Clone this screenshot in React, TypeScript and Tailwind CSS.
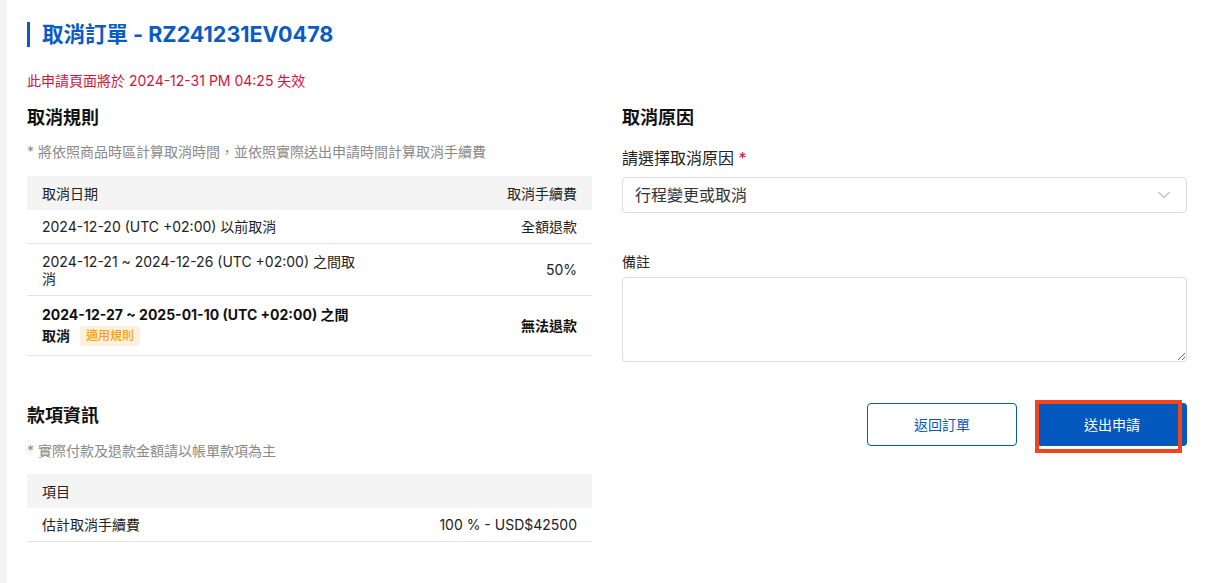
import React from 'react';
import { ChevronDown } from 'lucide-react';

const FONT = { fontFamily: 'Inter, "Noto Sans CJK TC", sans-serif' };

const RuleRow: React.FC<{ left: React.ReactNode; right: string; bold?: boolean; className?: string }> = ({ left, right, bold, className }) => (
    <div className={`flex justify-between items-center px-[15px] border-b border-[#e2e2e2] text-[14px] text-[#222] ${bold ? 'font-bold' : ''} ${className || ''}`}>
        <div className="leading-[17px]">{left}</div>
        <div>{right}</div>
    </div>
);

export default function App() {
    return (
        <div className="flex min-h-[583px] bg-white" style={FONT}>
            {/* Left strip */}
            <div className="w-[7px] shrink-0 bg-[#f3f3f3]" />

            <div className="flex-1 pl-5 pr-[19px] pt-[22px] pb-10">
                {/* Title */}
                <div className="flex items-center gap-3 h-[25px]">
                    <div className="w-[3px] h-[25px] bg-[#0a5bc4]" />
                    <h1 className="text-[21.5px] font-bold text-[#0a5bc4] leading-none">取消訂單 - RZ241231EV0478</h1>
                </div>
                <p className="mt-6 text-[14px] leading-5 text-[#d0143c]">此申請頁面將於 2024-12-31 PM 04:25 失效</p>

                <div className="grid grid-cols-2 gap-[30px] mt-[15px]">
                    {/* Left column */}
                    <div>
                        <h2 className="text-[18px] font-bold leading-6 text-[#111]">取消規則</h2>
                        <p className="mt-[13px] text-[14px] leading-[18px] text-[#8a8a8a]">* 將依照商品時區計算取消時間，並依照實際送出申請時間計算取消手續費</p>

                        <div className="mt-[15px]">
                            <div className="flex justify-between items-center h-[34px] px-[15px] bg-[#f4f4f4] text-[14px] text-[#222]">
                                <span>取消日期</span>
                                <span>取消手續費</span>
                            </div>
                            <RuleRow className="h-[34px]" left="2024-12-20 (UTC +02:00) 以前取消" right="全額退款" />
                            <RuleRow className="h-[52px]" left={<>2024-12-21 ~ 2024-12-26 (UTC +02:00) 之間取<br />消</>} right="50%" />
                            <div className="flex justify-between items-center h-[60px] px-[15px] border-b border-[#e2e2e2] text-[14px] text-[#111] font-bold">
                                <div>
                                    <div className="leading-[18px]">2024-12-27 ~ 2025-01-10 (UTC +02:00) 之間</div>
                                    <div className="flex items-center gap-[10px] mt-[2px]">
                                        <span className="leading-5">取消</span>
                                        <span className="px-[6px] h-[20px] leading-5 rounded-[3px] bg-[#fdf0dc] text-[#f5a20f] text-[12px] font-medium">適用規則</span>
                                    </div>
                                </div>
                                <div>無法退款</div>
                            </div>
                        </div>

                        <h2 className="mt-12 text-[18px] font-bold leading-6 text-[#111]">款項資訊</h2>
                        <p className="mt-[14px] text-[14px] leading-[18px] text-[#8a8a8a]">* 實際付款及退款金額請以帳單款項為主</p>

                        <div className="mt-[14px]">
                            <div className="flex items-center h-[34px] px-[15px] bg-[#f4f4f4] text-[14px] text-[#222]">
                                <span>項目</span>
                            </div>
                            <RuleRow className="h-[34px]" left="估計取消手續費" right="100 % - USD$42500" />
                        </div>
                    </div>

                    {/* Right column */}
                    <div>
                        <h2 className="text-[18px] font-bold leading-6 text-[#111]">取消原因</h2>
                        <label className="block mt-[17px] text-[16px] leading-[22px] text-[#222]">
                            請選擇取消原因 <span className="text-[#e0162b]">*</span>
                        </label>
                        <div className="mt-2 h-9 flex items-center justify-between pl-3 pr-3 border border-[#dcdcdc] rounded-[4px] text-[16px] text-[#333]">
                            <span>行程變更或取消</span>
                            <ChevronDown size={20} strokeWidth={2} className="text-[#c8c8c8]" />
                        </div>

                        <label className="block mt-[39px] text-[14px] leading-5 text-[#222]">備註</label>
                        <textarea className="block mt-[5px] w-full h-[85px] border border-[#dcdcdc] rounded-[4px] outline-none" />

                        <div className="flex justify-end gap-5 mt-[41px]">
                            <button className="w-[150px] h-[43px] rounded-[4px] border border-[#0558be] text-[#0558be] text-[14px]">返回訂單</button>
                            <div className="relative">
                                <button className="w-[150px] h-[43px] rounded-[4px] bg-[#0558be] text-white text-[14px]">送出申請</button>
                                <div className="absolute -left-[2px] -top-[3px] w-[147px] h-[53px] border-4 border-[#f2441d]" />
                            </div>
                        </div>
                    </div>
                </div>
            </div>
        </div>
    );
}
